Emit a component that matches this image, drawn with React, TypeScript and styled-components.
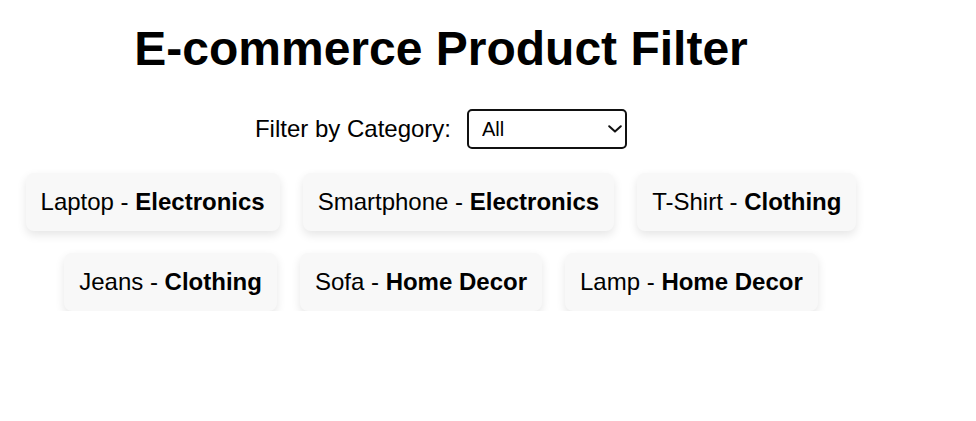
import React, { useState } from "react";
import styled, { createGlobalStyle } from "styled-components";

const GlobalStyle = createGlobalStyle`
  body {
    margin: 0;
    background: #ffffff;
    font-family: "Liberation Sans", Arial, sans-serif;
    color: #000;
  }
`;

const Page = styled.div`
  width: 882px;
  padding-top: 21px;
  display: flex;
  flex-direction: column;
  align-items: center;
`;

const Title = styled.h1`
  margin: 0 0 33px;
  font-size: 48px;
  font-weight: bold;
  line-height: normal;
`;

const FilterRow = styled.div`
  display: flex;
  align-items: center;
  gap: 16px;
  margin-bottom: 24px;
`;

const Label = styled.label`
  font-size: 24px;
`;

const SelectWrap = styled.div`
  position: relative;
  display: flex;
`;

const Select = styled.select`
  appearance: none;
  -webkit-appearance: none;
  width: 160px;
  height: 40px;
  padding: 0 30px 0 13px;
  font-family: "Liberation Sans", Arial, sans-serif;
  font-size: 20px;
  color: #000;
  background: #fff;
  border: 2px solid #111;
  border-radius: 5px;
  outline: none;
`;

const Chevron = styled.svg`
  position: absolute;
  right: 5px;
  top: 50%;
  width: 14px;
  height: 8px;
  margin-top: -4px;
  pointer-events: none;
`;

const CardList = styled.div`
  display: flex;
  flex-wrap: wrap;
  justify-content: center;
  gap: 22px 23px;
  width: 100%;
`;

const Card = styled.div`
  padding: 15px;
  font-size: 24px;
  line-height: normal;
  background: #f8f8f8;
  border-radius: 8px;
  box-shadow: 0 4px 10px rgba(0, 0, 0, 0.1);
`;

const products = [
  { name: "Laptop", category: "Electronics" },
  { name: "Smartphone", category: "Electronics" },
  { name: "T-Shirt", category: "Clothing" },
  { name: "Jeans", category: "Clothing" },
  { name: "Sofa", category: "Home Decor" },
  { name: "Lamp", category: "Home Decor" },
];

export default function App() {
  const [category, setCategory] = useState("All");
  const shown = products.filter((p) => category === "All" || p.category === category);
  return (
    <>
      <GlobalStyle />
      <Page>
        <Title>E-commerce Product Filter</Title>
        <FilterRow>
          <Label htmlFor="cat">Filter by Category:</Label>
          <SelectWrap>
            <Select id="cat" value={category} onChange={(e) => setCategory(e.target.value)}>
              <option value="All">All</option>
              <option value="Electronics">Electronics</option>
              <option value="Clothing">Clothing</option>
              <option value="Home Decor">Home Decor</option>
            </Select>
            <Chevron viewBox="0 0 14 8">
              <path d="M1.2 1.2 L7 6.6 L12.8 1.2" fill="none" stroke="#111" strokeWidth="2" strokeLinecap="round" strokeLinejoin="round" />
            </Chevron>
          </SelectWrap>
        </FilterRow>
        <CardList>
          {shown.map((p) => (
            <Card key={p.name}>
              {p.name} - <strong>{p.category}</strong>
            </Card>
          ))}
        </CardList>
      </Page>
    </>
  );
}
